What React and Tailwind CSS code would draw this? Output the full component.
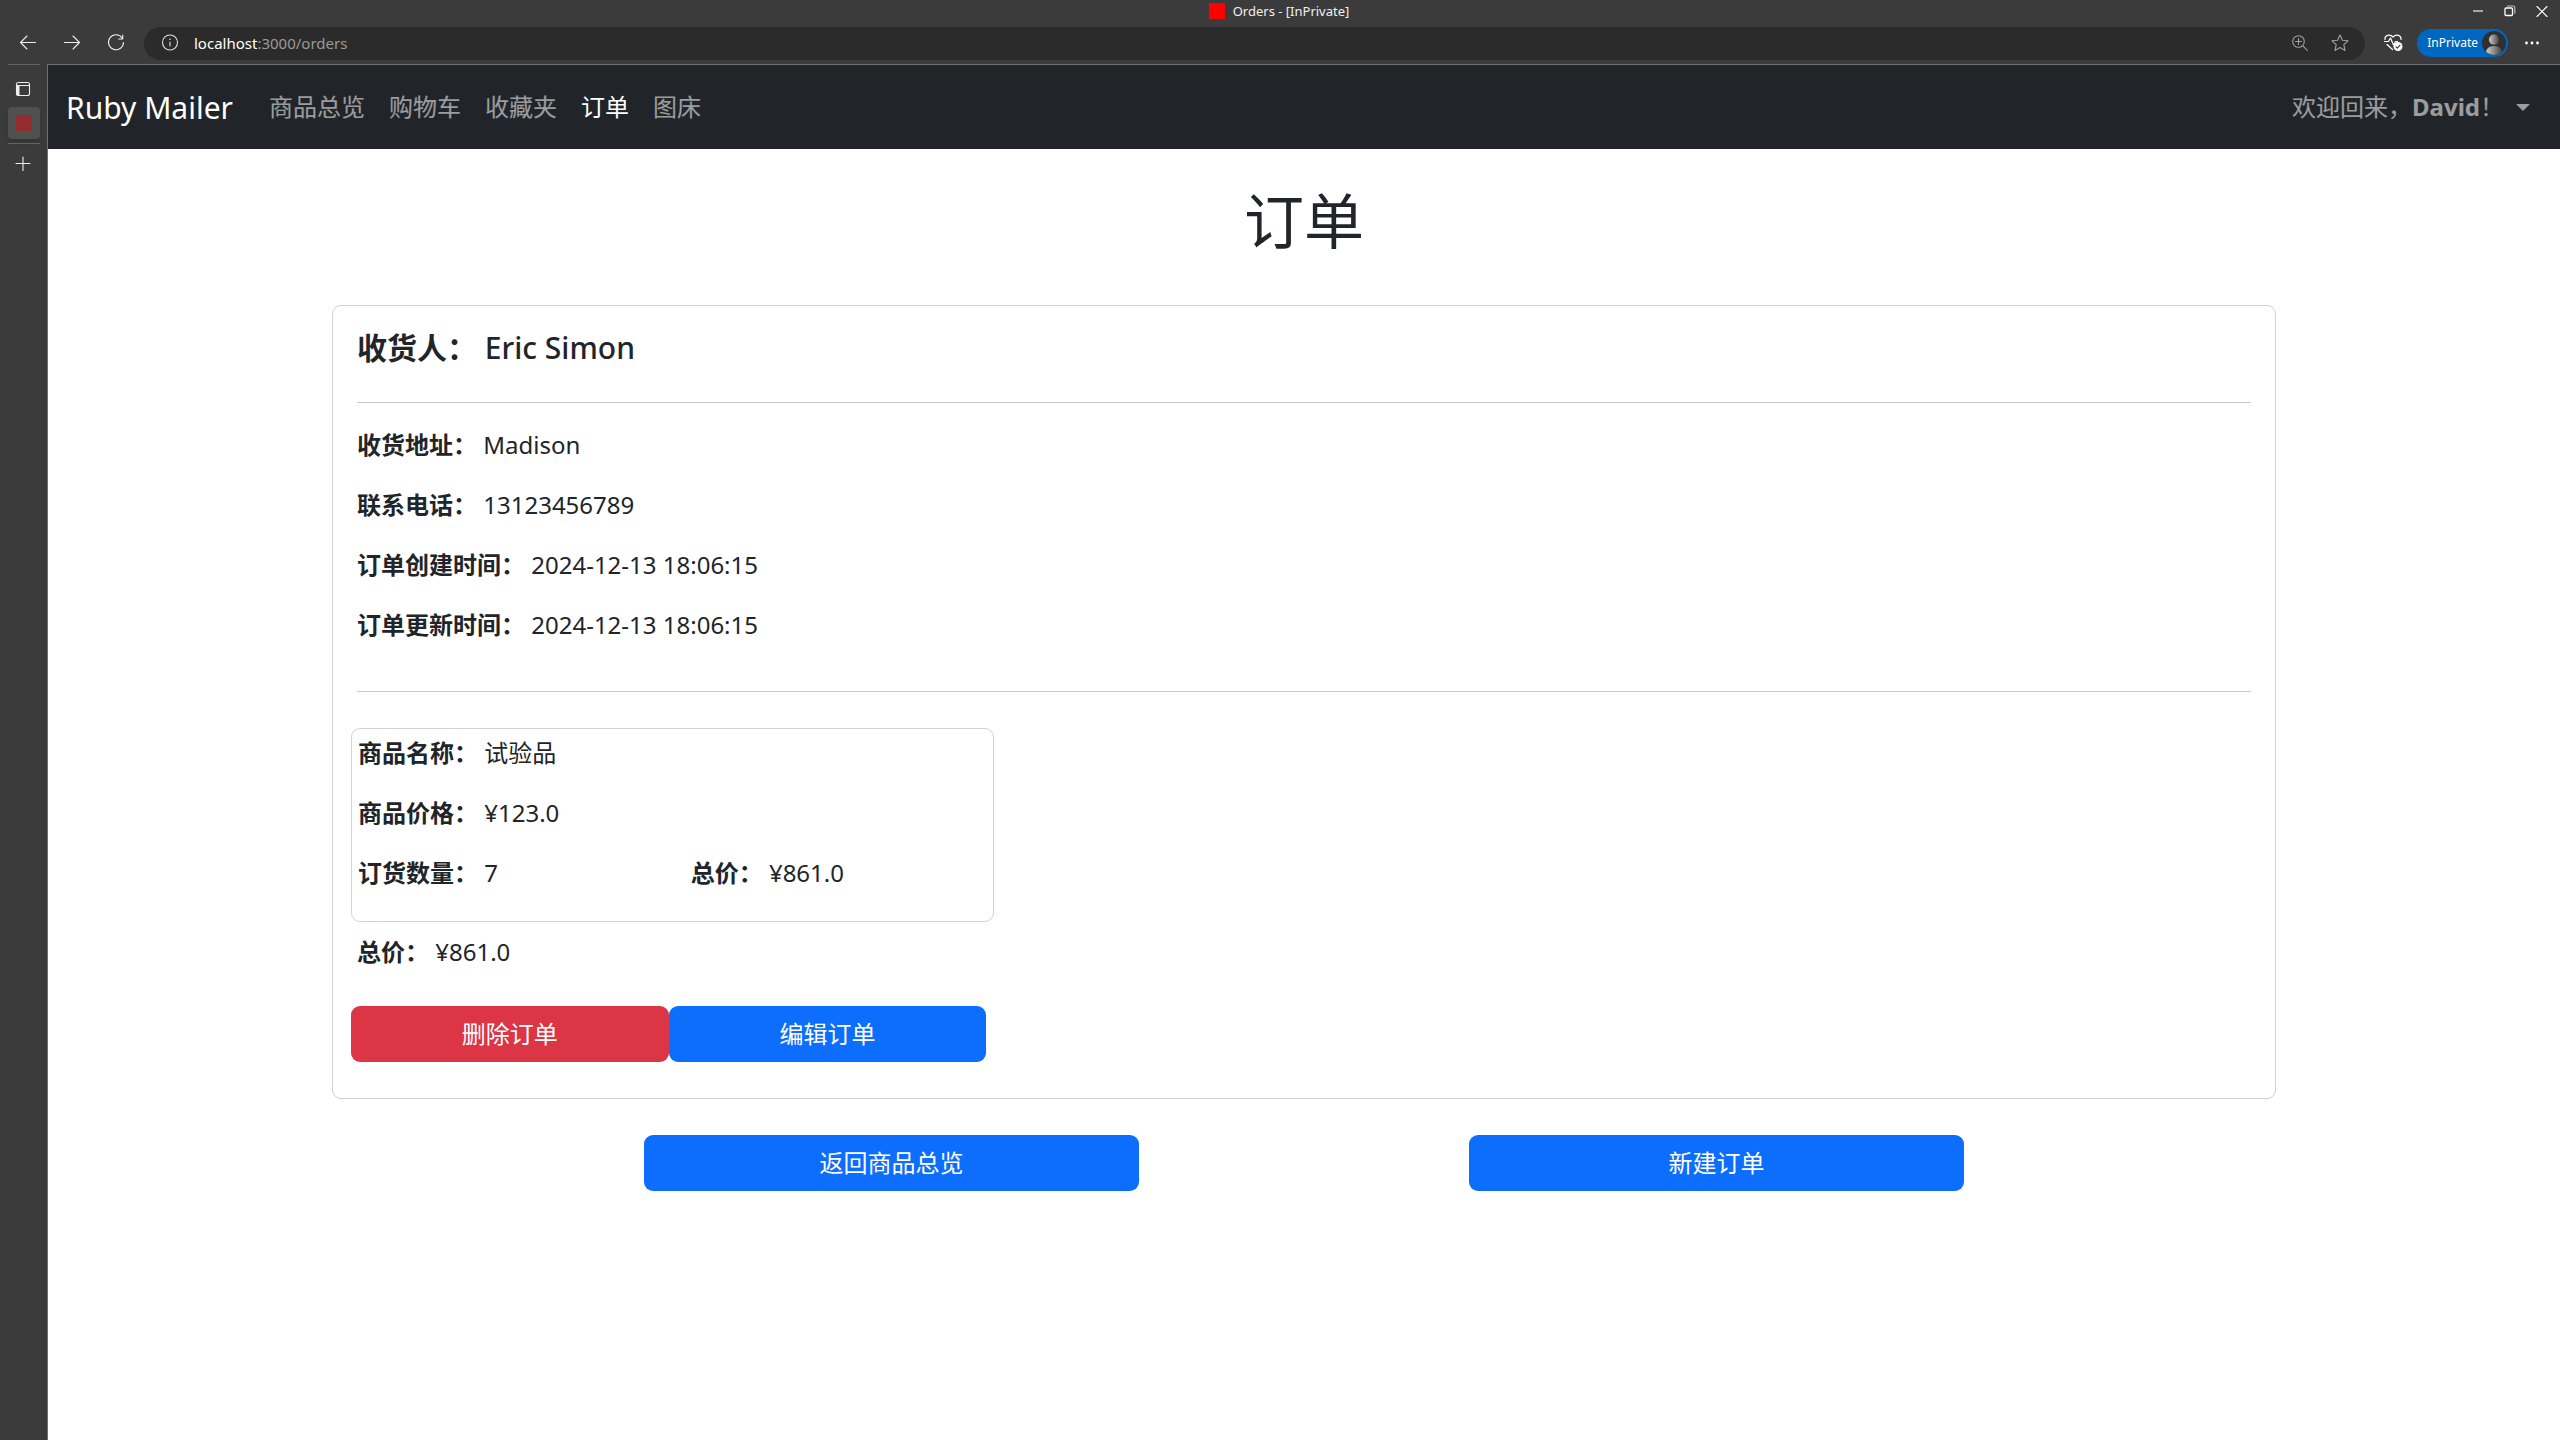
function Icon({ children, className = 'size-5', label }) {
  return (
    <svg viewBox="0 0 20 20" className={className} fill="none" stroke="currentColor" strokeWidth="1.1" strokeLinecap="round" strokeLinejoin="round" role="img" aria-label={label}>
      {children}
    </svg>
  );
}

function TitleBar() {
  return (
    <div className="grid h-[22px] grid-cols-[1fr_auto_1fr] items-center">
      <span />
      <div className="flex items-center gap-2 pr-0.5 text-[13px] leading-5 text-[#f0f0f0]">
        <span className="size-4 bg-[#ff0000]" />
        <span>Orders - [InPrivate]</span>
      </div>
      <div className="flex items-center justify-end gap-3 pr-2 text-white">
        <button aria-label="Minimize" className="flex size-5 items-center justify-center"><span className="h-0.5 w-2.5 bg-[#a5a5a5]" /></button>
        <button aria-label="Restore" className="size-5">
          <Icon>
            <rect x="5" y="7" width="7.500" height="7.500" rx="1" strokeWidth="1.300" />
            <path d="M7.500 5h5.500a1.800 1.800 0 0 1 1.800 1.800v5.500" stroke="#c4c4c4" />
          </Icon>
        </button>
        <button aria-label="Close" className="size-5">
          <Icon><path d="M5 5.500l10 10M15 5.500l-10 10" /></Icon>
        </button>
      </div>
    </div>
  );
}

function AddressBar() {
  return (
    <div className="flex h-[42px] items-center pr-[18px]">
      <div className="flex gap-6 px-[18px] text-[#ededed]">
        <button aria-label="Back" className="size-5"><Icon><path d="M17.500 9.500H2.500M9 3L2.500 9.500L9 16" /></Icon></button>
        <button aria-label="Forward" className="size-5"><Icon><path d="M2.500 9.500h15M11 3l6.500 6.500L11 16" /></Icon></button>
        <button aria-label="Reload" className="size-5"><Icon><path d="M16.200 5A7.500 7.500 0 1 0 17.500 9.500M16.700 2v4h-4" /></Icon></button>
      </div>
      <div className="flex h-[33px] min-w-0 flex-1 items-center rounded-full bg-[#2b2b2b] pl-4 pr-[15px]">
        <Icon className="size-5 text-[#e0e0e0]" label="Site information">
          <circle cx="10" cy="9.500" r="7.500" /><path d="M10 9v4" /><path d="M10 6.200v.100" strokeWidth="1.600" />
        </Icon>
        <a href="#orders" className="ml-3.5 flex-1 text-[15px] leading-5 text-[#9a9a9a]"><span className="text-white">localhost</span>:3000/orders</a>
        <div className="flex gap-5 text-[#a0a0a0]">
          <button aria-label="Zoom" className="size-5"><Icon><circle cx="8.500" cy="8.500" r="5.800" /><path d="M12.800 12.800l4.500 4.500M8.500 5.500v6M5.500 8.500h6" /></Icon></button>
          <button aria-label="Add to favorites" className="size-5"><Icon><path d="M10 2l2.400 5.200 5.600.6-4.200 3.900 1.200 5.700-5-2.900-5 2.900 1.200-5.700L2 7.800l5.600-.6z" /></Icon></button>
        </div>
      </div>
      <button aria-label="Browser essentials" className="ml-[18px] size-5 text-white">
        <Icon>
          <path d="M2 6.500C1.500 2.500 7 .500 10 4c3-3.500 8.500-1.500 8 2.500M1.500 8.500h4l2-3.500 3 7 2-3.500h2M4 11.500l5.500 5" strokeWidth="1.200" />
          <circle cx="15" cy="13.500" r="4.500" fill="currentColor" stroke="none" /><path d="M13 13.800l1.300 1.300 2.700-3" stroke="#3b3b3b" />
        </Icon>
      </button>
      <button className="ml-3.5 flex h-7 items-center gap-1 rounded-full bg-[#0067c0] pl-2.5 pr-0.5 text-[12px] text-white">
        InPrivate
        <Icon className="size-6">
          <defs>
            <linearGradient id="avatar"><stop offset="0" stopColor="#d0ceca" /><stop offset="1" stopColor="#474543" /></linearGradient>
          </defs>
          <circle cx="10" cy="10" r="10" fill="#30302f" stroke="none" />
          <circle cx="10" cy="7.200" r="4.200" fill="url(#avatar)" stroke="none" />
          <path d="M3.500 17.500c0-6.800 13-6.800 13 0a10 10 0 0 1-13 0" fill="url(#avatar)" stroke="none" />
        </Icon>
      </button>
      <button aria-label="Settings and more" className="ml-3.5 size-5 text-white">
        <Icon><g fill="currentColor" stroke="none"><circle cx="4.500" cy="10" r="1.400" /><circle cx="10" cy="10" r="1.400" /><circle cx="15.500" cy="10" r="1.400" /></g></Icon>
      </button>
    </div>
  );
}

function TabRail() {
  return (
    <aside className="flex w-[47px] shrink-0 flex-col items-center pl-px text-[#ededed]">
      <div className="h-px w-8 bg-[#636363]" />
      <button aria-label="Tab actions" className="mt-3.5 mr-0.5 size-5">
        <Icon><rect x="3.500" y="3.500" width="13" height="13" rx="2" /><path d="M3.500 6.500h13" /><path d="M5 7v9" strokeWidth="3" strokeLinecap="butt" /></Icon>
      </button>
      <button aria-label="Orders" className="mt-2 flex size-8 items-center justify-center rounded bg-[#505050] shadow-md">
        <span className="size-4 bg-[#932d2d]" />
      </button>
      <div className="mt-1 h-px w-8 bg-[#636363]" />
      <button aria-label="New tab" className="mt-2.5 mr-0.5 size-5"><Icon><path d="M10 3v13.500M3 9.500h14" /></Icon></button>
    </aside>
  );
}

const links = ['商品总览', '购物车', '收藏夹', '订单', '图床'];

function Navbar() {
  return (
    <nav className="flex items-center bg-[#212529] px-[18px] py-3 text-2xl leading-9 text-white/55">
      <a href="#home" className="mr-6 pt-2 pb-1.5 text-[30px] leading-[46px] text-white">Ruby Mailer</a>
      {links.map((l) => (
        <a key={l} href={'#' + l} className={l === '订单' ? 'px-3 text-white' : 'px-3'}>{l}</a>
      ))}
      <button className="ml-auto flex items-center gap-3 px-3">
        <span>欢迎回来，<b>David</b>！</span>
        <span className="border-x-[7px] border-t-[7px] border-x-transparent" />
      </button>
    </nav>
  );
}

function Field({ label, children }) {
  return <p className="mb-6"><strong>{label}：</strong> {children}</p>;
}

const btn = 'block rounded-[9px] py-2.5 text-center text-white';

function Orders() {
  return (
    <main className="mx-auto w-full max-w-[1980px] text-2xl leading-9 text-[#212529]">
      <h1 className="mt-9 mb-12 text-center text-6xl leading-[72px] font-normal">订单</h1>
      <section className="mx-[18px] rounded-[9px] border border-[#d2d2d2] px-6 pt-6 pb-9">
        <h5 className="mb-9 text-[30px] leading-9 font-medium"><strong>收货人：</strong> Eric Simon</h5>
        <hr className="mb-6 border-[#c7c8c9]" />
        <Field label="收货地址">Madison</Field>
        <Field label="联系电话">13123456789</Field>
        <Field label="订单创建时间">2024-12-13 18:06:15</Field>
        <Field label="订单更新时间">2024-12-13 18:06:15</Field>
        <hr className="mt-12 mb-9 border-[#c7c8c9]" />
        <div className="-ml-1.5 -mr-[30px] mb-3">
          <div className="w-1/3 rounded-[9px] border border-[#d2d2d2] p-1.5">
            <Field label="商品名称">试验品</Field>
            <Field label="商品价格">¥123.0</Field>
            <div className="grid grid-cols-2 gap-x-9">
              <Field label="订货数量">7</Field>
              <Field label="总价">¥861.0</Field>
            </div>
          </div>
        </div>
        <p className="mb-9"><strong>总价：</strong> ¥861.0</p>
        <div className="-mx-1.5 grid grid-cols-6">
          <button className={btn + ' bg-[#dc3545]'}>删除订单</button>
          <a href="#edit" className={btn + ' bg-[#0d6efd]'}>编辑订单</a>
        </div>
      </section>
      <div className="mt-9 flex justify-evenly">
        <a href="#products" className={btn + ' w-1/4 bg-[#0d6efd]'}>返回商品总览</a>
        <a href="#new" className={btn + ' w-1/4 bg-[#0d6efd]'}>新建订单</a>
      </div>
    </main>
  );
}

export default function App() {
  return (
    <div lang="zh-CN" className="flex min-h-screen flex-col bg-[#3b3b3b] font-['Noto_Sans','Noto_Sans_CJK_SC',sans-serif]">
      <TitleBar />
      <AddressBar />
      <div className="flex flex-1">
        <TabRail />
        <div className="min-w-0 flex-1 border-t border-l border-[#707070] bg-white">
          <Navbar />
          <Orders />
        </div>
      </div>
    </div>
  );
}
